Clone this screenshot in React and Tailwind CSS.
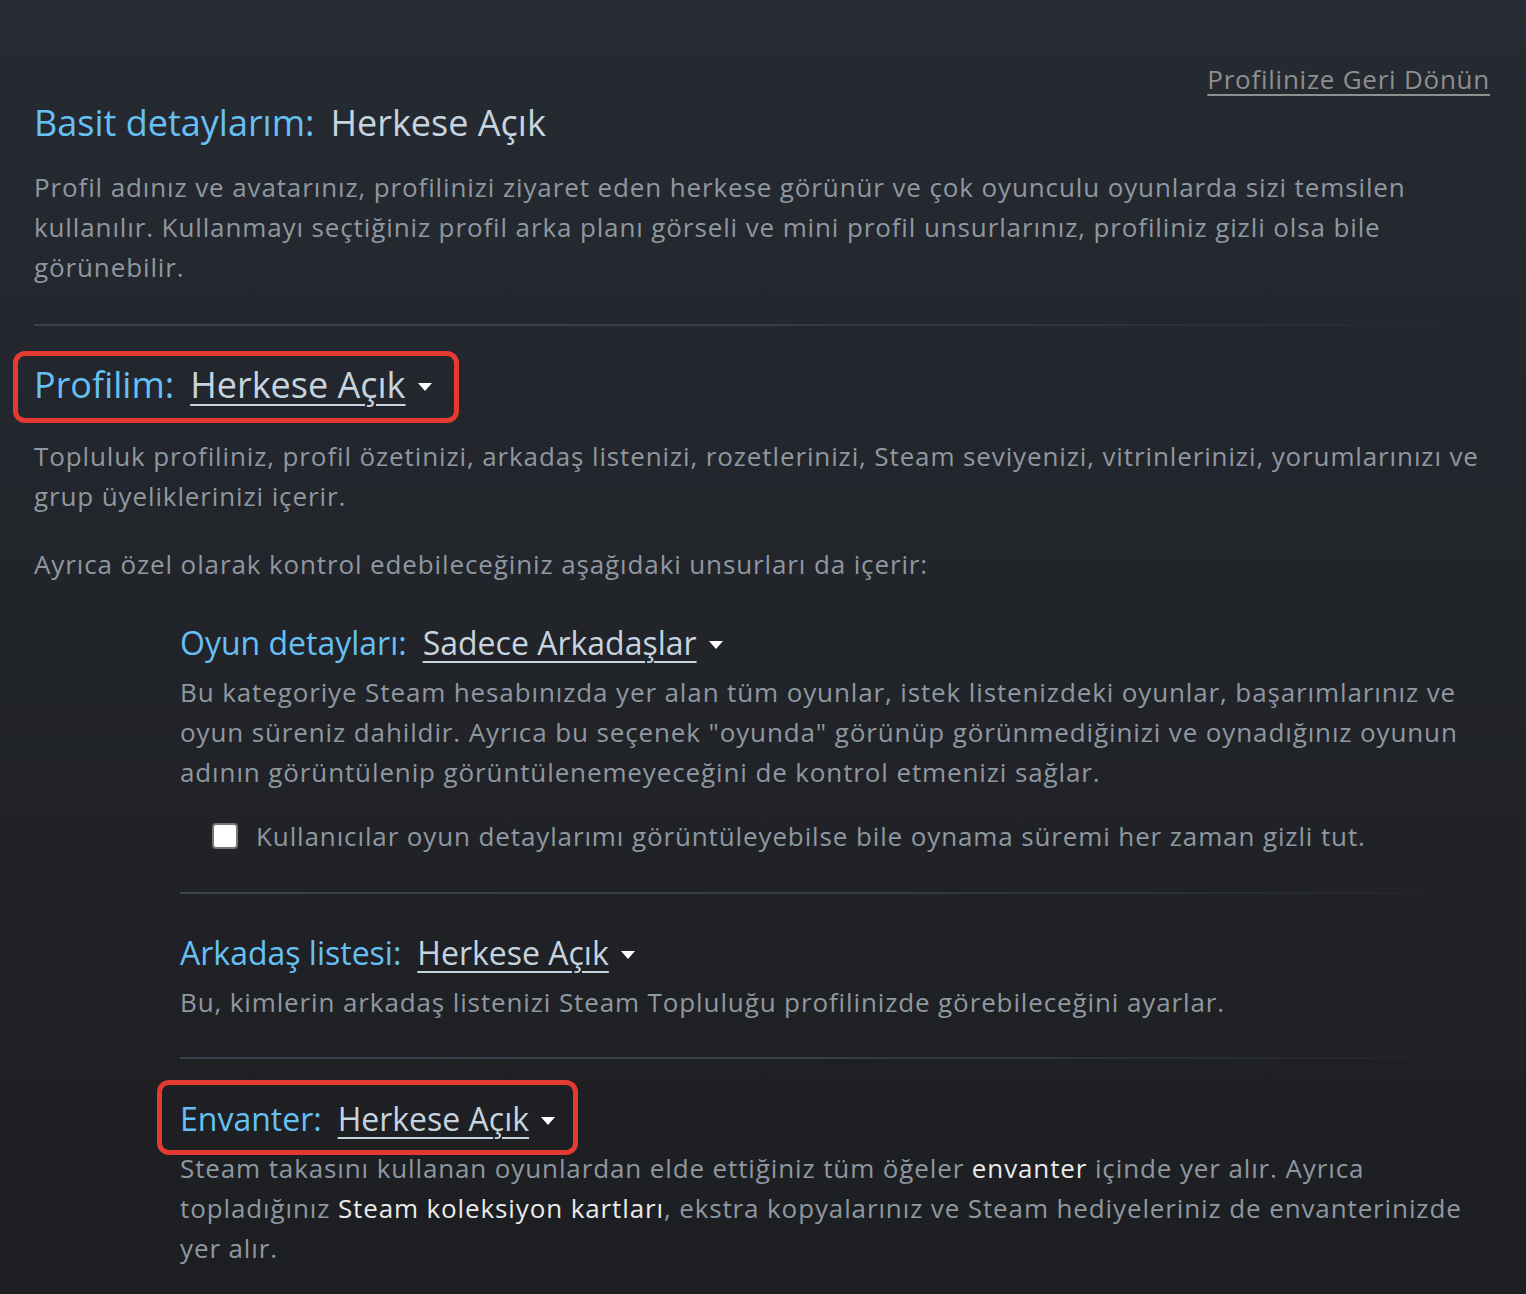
const font = { fontFamily: '"Open Sans", "Noto Sans", sans-serif' };

function Caret() {
  return (
    <svg className="ml-[12px] mt-[4px] h-[8px] w-[14px]" viewBox="0 0 14 8">
      <path d="M0 0h14L7 8z" fill="#ffffff" />
    </svg>
  );
}

function Heading({ label, value, dropdown, box, small }) {
  return (
    <div
      className={
        'relative flex items-center self-start h-[44px] leading-[44px] tracking-normal ' +
        (small ? 'text-[32px]' : 'text-[36px]')
      }
    >
      {box && <div className={'absolute rounded-[12px] border-[5px] border-[#e43a31] ' + box} />}
      <span className="text-[#66c0f4]">{label}</span>
      <span
        className={
          'ml-[16px] text-[#c6d4df] ' +
          (dropdown ? 'underline decoration-[2px] underline-offset-[6px]' : '')
        }
      >
        {value}
      </span>
      {dropdown && <Caret />}
    </div>
  );
}

function Divider() {
  return <div className="h-[2px] bg-gradient-to-r from-[#3b4350] via-[#363d49] to-transparent" />;
}

export default function App() {
  return (
    <div
      className="min-h-[1294px] w-full bg-gradient-to-b from-[#262a32] to-[#1d1e21] pl-[34px] pr-[36px] text-[26px] leading-[40px] tracking-[0.88px] text-[#8f98a0]"
      style={font}
    >
      <div className="flex justify-end pt-[59px]">
        <a className="text-[#8f8f8f] underline decoration-[2px] underline-offset-[5px] tracking-[0.75px]">Profilinize Geri Dönün</a>
      </div>

      <div className="mt-[2px] flex flex-col">
        <Heading label="Basit detaylarım:" value="Herkese Açık" />
      </div>
      <p className="mt-[22px]">
        Profil adınız ve avatarınız, profilinizi ziyaret eden herkese görünür ve çok oyunculu oyunlarda sizi temsilen
        kullanılır. Kullanmayı seçtiğiniz profil arka planı görseli ve mini profil unsurlarınız, profiliniz gizli olsa bile
        görünebilir.
      </p>

      <div className="mt-[37px]">
        <Divider />
      </div>

      <div className="mt-[37px] flex flex-col">
        <Heading
          label="Profilim:"
          value="Herkese Açık"
          dropdown
          box="-left-[21px] -right-[27px] -top-[12px] -bottom-[16px]"
        />
      </div>
      <p className="mt-[29px]">
        Topluluk profiliniz, profil özetinizi, arkadaş listenizi, rozetlerinizi, Steam seviyenizi, vitrinlerinizi, yorumlarınızı ve
        grup üyeliklerinizi içerir.
      </p>
      <p className="mt-[28px]">Ayrıca özel olarak kontrol edebileceğiniz aşağıdaki unsurları da içerir:</p>

      <div className="ml-[146px] flex flex-col">
        <div className="mt-[37px] flex flex-col">
          <Heading label="Oyun detayları:" value="Sadece Arkadaşlar" dropdown small />
        </div>
        <p className="mt-[7px]">
          Bu kategoriye Steam hesabınızda yer alan tüm oyunlar, istek listenizdeki oyunlar, başarımlarınız ve
          oyun süreniz dahildir. Ayrıca bu seçenek "oyunda" görünüp görünmediğinizi ve oynadığınız oyunun
          adının görüntülenip görüntülenemeyeceğini de kontrol etmenizi sağlar.
        </p>
        <label className="mt-[24px] ml-[32px] flex items-center">
          <span className="h-[26px] w-[26px] rounded-[4px] border-2 border-[#767676] bg-white" />
          <span className="ml-[18px]">
            Kullanıcılar oyun detaylarımı görüntüleyebilse bile oynama süremi her zaman gizli tut.
          </span>
        </label>

        <div className="mt-[36px]">
          <Divider />
        </div>

        <div className="mt-[37px] flex flex-col">
          <Heading label="Arkadaş listesi:" value="Herkese Açık" dropdown small />
        </div>
        <p className="mt-[7px]">Bu, kimlerin arkadaş listenizi Steam Topluluğu profilinizde görebileceğini ayarlar.</p>

        <div className="mt-[35px]">
          <Divider />
        </div>

        <div className="mt-[38px] flex flex-col">
          <Heading
            label="Envanter:"
            value="Herkese Açık"
            dropdown
            small
            box="-left-[23px] -right-[23px] -top-[17px] -bottom-[14px]"
          />
        </div>
        <p className="mt-[7px] pb-[25px]">
          Steam takasını kullanan oyunlardan elde ettiğiniz tüm öğeler <span className="text-[#ebebeb]">envanter</span> içinde yer alır. Ayrıca
          topladığınız <span className="text-[#ebebeb]">Steam koleksiyon kartları</span>, ekstra kopyalarınız ve Steam hediyeleriniz de envanterinizde
          yer alır.
        </p>
      </div>
    </div>
  );
}
